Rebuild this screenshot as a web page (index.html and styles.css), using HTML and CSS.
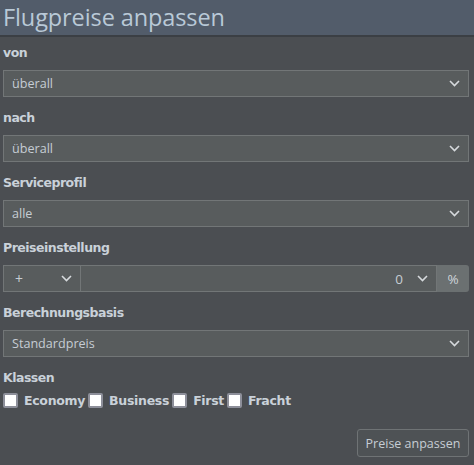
FILE: index.html
```html
<!DOCTYPE html>
<html lang="de">
<head>
<meta charset="utf-8">
<link rel="stylesheet" href="styles.css">
</head>
<body>
<div class="panel">
  <div class="header"><h1 class="title">Flugpreise anpassen</h1></div>
  <form class="form">
    <div class="group">
      <div class="label">von</div>
      <div class="select"><span class="value">überall</span><svg class="chev" width="11" height="7" viewBox="0 0 11 7"><path d="M1 1l4.5 4.5L10 1" fill="none" stroke="#d6dadd" stroke-width="1.6"/></svg></div>
    </div>
    <div class="group">
      <div class="label">nach</div>
      <div class="select"><span class="value">überall</span><svg class="chev" width="11" height="7" viewBox="0 0 11 7"><path d="M1 1l4.5 4.5L10 1" fill="none" stroke="#d6dadd" stroke-width="1.6"/></svg></div>
    </div>
    <div class="group">
      <div class="label">Serviceprofil</div>
      <div class="select"><span class="value">alle</span><svg class="chev" width="11" height="7" viewBox="0 0 11 7"><path d="M1 1l4.5 4.5L10 1" fill="none" stroke="#d6dadd" stroke-width="1.6"/></svg></div>
    </div>
    <div class="group">
      <div class="label">Preiseinstellung</div>
      <div class="input-group">
        <div class="select sign"><span class="value">+</span><svg class="chev" width="11" height="7" viewBox="0 0 11 7"><path d="M1 1l4.5 4.5L10 1" fill="none" stroke="#d6dadd" stroke-width="1.6"/></svg></div>
        <div class="select amount"><span class="value num">0</span><svg class="chev" width="11" height="7" viewBox="0 0 11 7"><path d="M1 1l4.5 4.5L10 1" fill="none" stroke="#d6dadd" stroke-width="1.6"/></svg></div>
        <div class="addon">%</div>
      </div>
    </div>
    <div class="group">
      <div class="label">Berechnungsbasis</div>
      <div class="select"><span class="value">Standardpreis</span><svg class="chev" width="11" height="7" viewBox="0 0 11 7"><path d="M1 1l4.5 4.5L10 1" fill="none" stroke="#d6dadd" stroke-width="1.6"/></svg></div>
    </div>
    <div class="group">
      <div class="label">Klassen</div>
      <div class="checks">
        <label class="check"><input type="checkbox" class="box"> Economy</label>
        <label class="check"><input type="checkbox" class="box"> Business</label>
        <label class="check"><input type="checkbox" class="box"> First</label>
        <label class="check"><input type="checkbox" class="box"> Fracht</label>
      </div>
    </div>
    <div class="actions">
      <button type="button" class="btn">Preise anpassen</button>
    </div>
  </form>
</div>
</body>
</html>
```

FILE: styles.css
```css
* { box-sizing: border-box; }
html, body { margin: 0; padding: 0; }
body {
  width: 474px;
  height: 465px;
  background: #4b4e52;
  font-family: "Open Sans", "Noto Sans", sans-serif;
  color: #c9d1d9;
  overflow: hidden;
}
.header {
  height: 37px;
  background: #525c6a;
  border-bottom: 2px solid #3b3f44;
  padding-left: 3px;
}
.title {
  margin: 0;
  font-weight: 400;
  font-size: 23.5px;
  line-height: 34px;
  color: #b9c9d7;
  letter-spacing: -0.1px;
}
.form {
  padding: 7px 5px 0 3px;
}
.group { margin-bottom: 12px; }
.label {
  font-family: "DejaVu Sans", sans-serif;
  font-weight: 700;
  font-size: 12.5px;
  line-height: 18px;
  margin-bottom: 8px;
  color: #c9d1d9;
  letter-spacing: -0.5px;
}
.select {
  height: 27px;
  background: #585c5d;
  border: 1px solid #727677;
  display: flex;
  align-items: center;
  padding: 0 8px 0 8px;
  font-size: 12.6px;
  color: #c6cdd4;
}
.value { flex: 1; }
.chev { flex: none; }
.input-group { display: flex; }
.sign { width: 78px; flex: none; padding-left: 11px; padding-right: 8px; }
.sign .value { font-size: 14px; }
.amount { flex: 1; border-left: none; padding-right: 8px; }
.num { text-align: right; padding-right: 14px; font-size: 13.5px; }
.addon {
  width: 32px;
  flex: none;
  height: 27px;
  background: #6b7071;
  border-radius: 0 3px 3px 0;
  display: flex;
  align-items: center;
  justify-content: center;
  font-size: 13.5px;
  color: #cdd4da;
}
.checks { display: flex; gap: 3px; margin-top: -2px; }
.check {
  display: flex;
  align-items: center;
  gap: 6px;
  font-family: "DejaVu Sans", sans-serif;
  font-weight: 700;
  font-size: 12.5px;
  letter-spacing: -0.3px;
  color: #c9d1d9;
}
.box {
  appearance: none;
  -webkit-appearance: none;
  margin: 0;
  width: 15px;
  height: 15px;
  background: #fff;
  border: 2px solid #8d8f9a;
  border-radius: 2px;
}
.actions {
  display: flex;
  justify-content: flex-end;
  margin-top: 21px;
}
.btn {
  width: 112px;
  height: 28px;
  background: #4e5255;
  border: 1px solid #6f7375;
  border-radius: 3px;
  font-family: "Open Sans", "Noto Sans", sans-serif;
  font-size: 12.5px;
  color: #c6cdd4;
  padding: 0;
}
```
